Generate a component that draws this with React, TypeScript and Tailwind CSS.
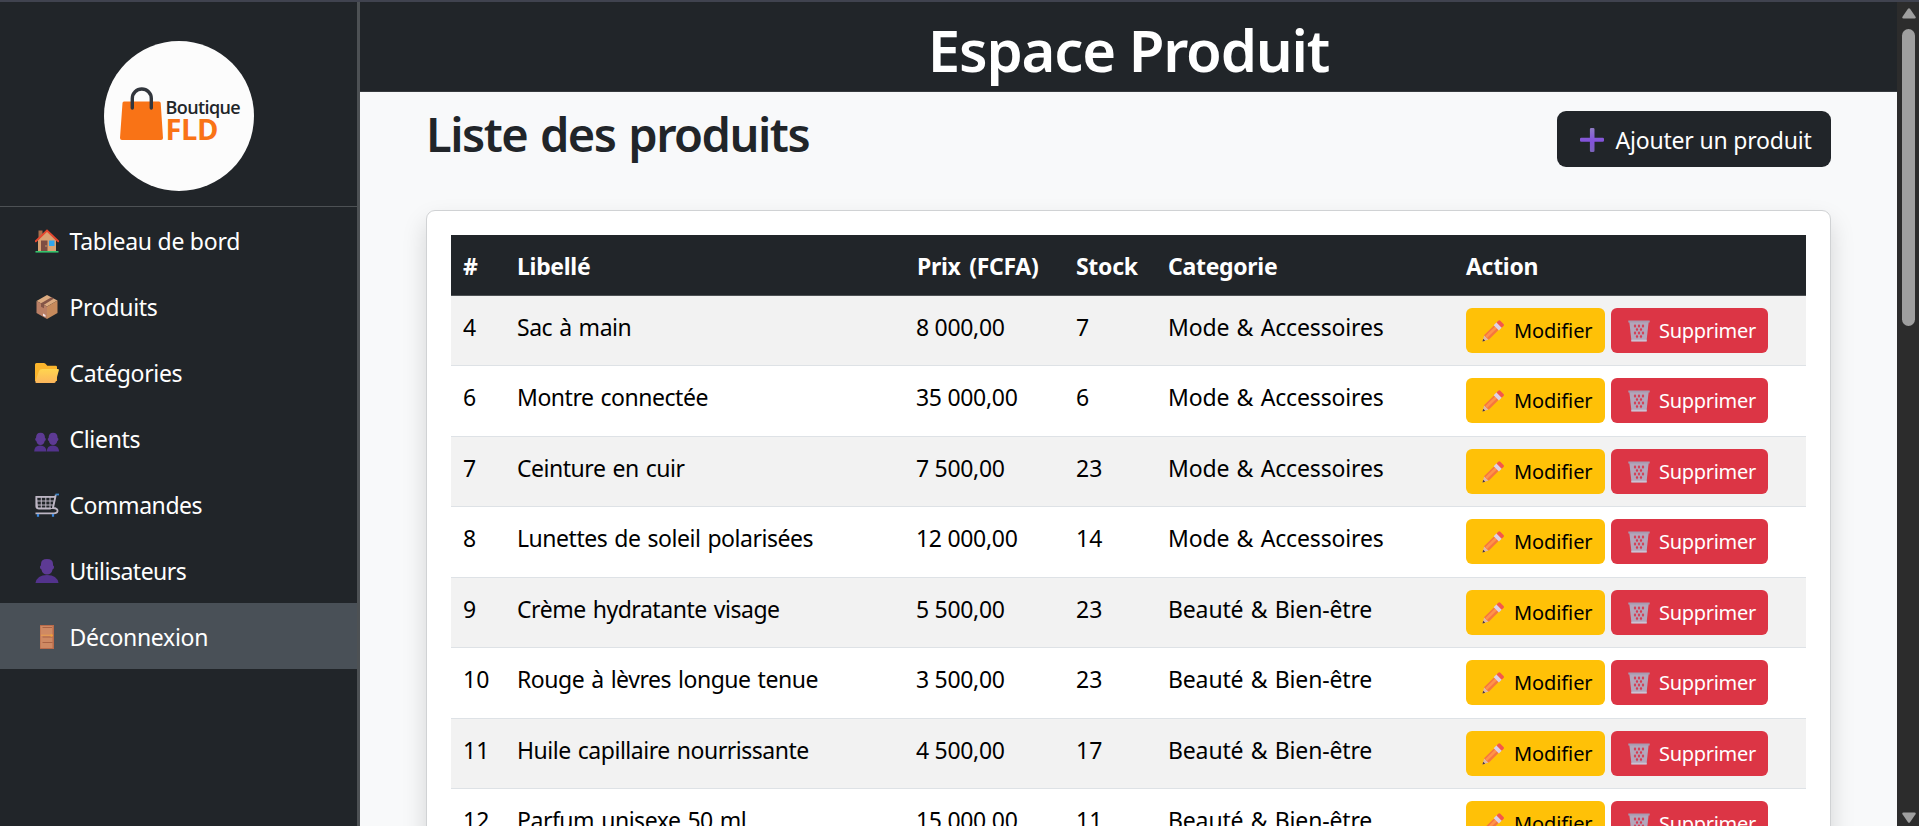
import React from 'react';

const navItems = [
  { label: 'Tableau de bord', icon: HouseIcon, active: false, track: 'tracking-[-0.25px]' },
  { label: 'Produits', icon: BoxIcon, active: false, track: 'tracking-[-0.3px]' },
  { label: 'Catégories', icon: FolderIcon, active: false, track: 'tracking-[-0.35px]' },
  { label: 'Clients', icon: PeopleIcon, active: false, track: 'tracking-[-0.3px]' },
  { label: 'Commandes', icon: CartIcon, active: false, track: 'tracking-[-0.45px]' },
  { label: 'Utilisateurs', icon: UserIcon, active: false, track: 'tracking-[-0.5px]' },
  { label: 'Déconnexion', icon: DoorIcon, active: true, track: 'tracking-[-0.3px]' },
];

const products = [
  { id: 4, name: 'Sac à main', price: '8 000,00', stock: 7, category: 'Mode & Accessoires' },
  { id: 6, name: 'Montre connectée', price: '35 000,00', stock: 6, category: 'Mode & Accessoires' },
  { id: 7, name: 'Ceinture en cuir', price: '7 500,00', stock: 23, category: 'Mode & Accessoires' },
  { id: 8, name: 'Lunettes de soleil polarisées', price: '12 000,00', stock: 14, category: 'Mode & Accessoires' },
  { id: 9, name: 'Crème hydratante visage', price: '5 500,00', stock: 23, category: 'Beauté & Bien-être' },
  { id: 10, name: 'Rouge à lèvres longue tenue', price: '3 500,00', stock: 23, category: 'Beauté & Bien-être' },
  { id: 11, name: 'Huile capillaire nourrissante', price: '4 500,00', stock: 17, category: 'Beauté & Bien-être' },
  { id: 12, name: 'Parfum unisexe 50 ml', price: '15 000,00', stock: 11, category: 'Beauté & Bien-être' },
];

function HouseIcon() {
  return (
    <svg viewBox="0 0 24 24" className="size-6">
      <path d="M3.500 1.500h4v7h-4z" fill="#a96f4c" />
      <path d="M12 2 21 11v11H3V11z" fill="#d9a273" />
      <path d="M6 11.500h6.500V22H6z" fill="#7d4d43" />
      <circle cx="11" cy="17" r=".7" fill="#e0b080" />
      <rect x="14" y="11.500" width="5.500" height="5.500" fill="#2fa5ee" />
      <path d="M.8 12.200 12 1.600l11.200 10.600" fill="none" stroke="#e5482f" strokeWidth="2" strokeLinecap="round" />
      <path d="M.5 22.800h23" stroke="#35c46e" strokeWidth="1.600" />
    </svg>
  );
}

function BoxIcon() {
  return (
    <svg viewBox="0 0 24 24" className="size-6">
      <path d="M12 0 22.500 5.500 12 11.500 1.500 6z" fill="#dcab80" />
      <path d="M1.500 6 12 11.500V24L1.500 18z" fill="#b97f65" />
      <path d="M22.500 5.500 12 11.500V24l10.500-6z" fill="#c68a5c" />
      <path d="m6 8.300 10.500-6 2.500 1.300L9 9.700v3.600l-3-1.600z" fill="#845547" />
      <path d="m8 18.500 2.500 1.400v2.200L8 20.700z" fill="#f3e7ec" />
    </svg>
  );
}

function FolderIcon() {
  return (
    <svg viewBox="0 0 24 24" className="size-6">
      <defs>
        <linearGradient id="folder" x1="0" y1="0" x2="0" y2="1">
          <stop offset="0" stopColor="#ffd54f" />
          <stop offset="1" stopColor="#fbb55c" />
        </linearGradient>
      </defs>
      <path d="M0 3.500Q0 2 1.500 2h7.300q1 0 1.700.8l1.800 1.900h8.500Q22 4.700 22 6v14H0z" fill="#fbb52c" />
      <path d="M7.500 8h15.300q1.500 0 1 1.500l-3 11q-.4 1.500-2 1.500H1.500Q0 22 .4 20.500L4 10q.7-2 3.500-2z" fill="url(#folder)" />
    </svg>
  );
}

function PeopleIcon() {
  return (
    <svg viewBox="0 0 24 24" className="size-6 overflow-visible">
      {[-0.8, 11.8].map((dx) => (
        <g key={dx} transform={`translate(${dx} 1)`}>
          <path d="M1.800 10q0-5.200 4.500-5.200T10.800 10q1 .2.8 1.600-.2 1.200-1.100 1.400-.8 4-4.200 4T2.100 13Q1.200 12.800 1 11.600.8 10.200 1.800 10z" fill="#5d3a94" />
          <path d="M0 23.500q0-6 6-6t6.300 6z" fill="#53338c" />
        </g>
      ))}
    </svg>
  );
}

function UserIcon() {
  return (
    <svg viewBox="0 0 24 24" className="size-6">
      <path d="M6 5q0-5 6-5t6 5v1.500q1.200.2 1 2-.2 1.500-1.300 1.700Q16.500 15.500 12 15.500T6.300 10.200Q5.200 10 5 8.500 4.800 6.700 6 6.500z" fill="#5d3a94" />
      <path d="M.5 24Q2 16 12 16t11.500 8z" fill="#53338c" />
    </svg>
  );
}

function CartIcon() {
  return (
    <svg viewBox="0 0 24 24" className="size-6 overflow-visible" fill="none" stroke="#bdb6c4">
      <path d="M1.500 3.800H20l-2.300 11.700H2.500zM1.500 8h17M2 12h16M6.300 4v11.500M10.800 4v11.500M15 4v11.500" strokeWidth="1" />
      <path d="M.5 3.800h20M1.300 3.500v9.500q0 2.500 2.500 2.500h12M20.800 1.800 18 15q5 .3 4.500 3.200Q22 20.300 19 20.300H.500" strokeWidth="1.800" />
      <path d="M20.500 1.500h3.500" stroke="#3f87c9" strokeWidth="1.800" />
      <path d="M3 21v2.800M18 21v2.800" stroke="#3a86dd" strokeWidth="2.200" />
    </svg>
  );
}

function DoorIcon() {
  return (
    <svg viewBox="0 0 24 24" className="size-6">
      <rect x="5" y="0" width="14" height="24" fill="#b96a4a" />
      <rect x="5.500" y="1" width="12" height="22" fill="#cf8963" />
      <path d="M7.500 2.500h9.500M7.500 12h10M7.500 17.500h10" stroke="#aa6244" strokeWidth="1" fill="none" />
      <path d="M6 10.300h11.500" stroke="#e39a55" strokeWidth="1.400" />
      <circle cx="16.500" cy="10.500" r="1.200" fill="#f0a03a" />
    </svg>
  );
}

function PlusIcon() {
  return (
    <svg viewBox="0 0 24 24" className="size-6">
      <defs>
        <linearGradient id="plus" x1="0" y1="0" x2="0" y2="1">
          <stop offset="0" stopColor="#8f7cc4" />
          <stop offset=".55" stopColor="#8351dc" />
          <stop offset="1" stopColor="#7a63b8" />
        </linearGradient>
      </defs>
      <path d="M11.200 0h2q1.300 0 1.300 1.300v8.500h8.200q1.300 0 1.300 1.300v1.400q0 1.300-1.300 1.300h-8.200v8.900q0 1.300-1.300 1.300h-2q-1.300 0-1.300-1.300v-8.900H1.300Q0 13.800 0 12.500v-1.400Q0 9.800 1.300 9.800h8.600V1.300Q9.900 0 11.200 0z" fill="url(#plus)" />
    </svg>
  );
}

function PencilIcon() {
  return (
    <svg viewBox="0 0 22 22" className="size-[22px]">
      <path d="m.5 21.500 1.700-6.300 4.400 4.400z" fill="#dfb9a9" />
      <path d="m.5 21.500.7-2.700 2 2z" fill="#443347" />
      <path d="M2 15.300 12.500 5l4.600 4.600L6.700 19.800z" fill="#f6763f" />
      <path d="m3.200 16.300 10.300-10.200 1.800 1.800L5 18.100z" fill="#ff934a" />
      <path d="m11.700 5.200 3-3 5.200 5.200-3 3z" fill="#dcd2ea" />
      <path d="m14.500 2.500 1.800-1.800q1-1 2 0l3.200 3.200q1 1 0 2l-1.800 1.800z" fill="#f4574b" />
    </svg>
  );
}

function TrashIcon() {
  return (
    <svg viewBox="0 0 22 22" className="size-[22px]">
      <path d="M1.300 1.500h19.400l-2.200 19.700h-15z" fill="#b3a6bb" />
      <path
        d="m7 4 1.300 2L7 8 5.700 6zm4 0 1.300 2L11 8 9.700 6zm4 0 1.300 2L15 8l-1.300-2zM9 7.500l1.300 2L9 11.500l-1.300-2zm4 0 1.300 2-1.300 2-1.300-2zM7 11l1.300 2L7 15l-1.300-2zm4 0 1.300 2-1.300 2-1.300-2zm4 0 1.300 2-1.300 2-1.300-2zm-6 3.500 1.300 2L9 18.500l-1.300-2zm4 0 1.300 2-1.300 2-1.300-2z"
        fill="#d63a52"
      />
      <path d="M.3 1.500h21.400" stroke="#a89bb0" strokeWidth="2" />
      <path d="M3.300 20.600h15.400" stroke="#cdc3d3" strokeWidth="1.800" />
    </svg>
  );
}

function Logo() {
  return (
    <div className="flex size-[150px] items-start rounded-full bg-[#fcfcfc] pt-[46px] pl-4">
      <svg viewBox="0 0 43 53" className="h-[53px] w-[43px] shrink-0">
        <path d="M4 14.500h35q1.500 0 1.700 1.500L43 51q0 2-2 2H2q-2 0-2-2L2.500 16q.1-1.500 1.500-1.500z" fill="#f97316" />
        <path d="M12.300 21V11.500a9.500 9.500 0 0 1 19 0V21" fill="none" stroke="#32363d" strokeWidth="3.400" strokeLinecap="round" />
      </svg>
      <div className="mt-[10px] ml-[3px] flex flex-col font-['Open_Sans',sans-serif]">
        <span className="text-[18px] leading-[21px] font-semibold tracking-[-0.6px] text-[#222529]">Boutique</span>
        <span className="text-[29px] leading-[21px] font-bold tracking-[-0.4px] text-[#f97316]">FLD</span>
      </div>
    </div>
  );
}

function Sidebar() {
  return (
    <aside className="flex w-[360px] shrink-0 flex-col border-r-[3px] border-[#4d5154] bg-[#212529]">
      <div className="flex h-[205px] shrink-0 justify-center border-b border-[#4d5154] pt-[39px]">
        <Logo />
      </div>
      <nav className="flex flex-col">
        {navItems.map(({ label, icon: Icon, active, track }) => (
          <a key={label} className={`flex h-[66px] items-center pt-0.5 pl-[35px] text-[23px] text-white ${track} ${active ? 'bg-[#495057]' : ''}`}>
            <Icon />
            <span className="ml-[10.5px]">{label}</span>
          </a>
        ))}
      </nav>
    </aside>
  );
}

function ProductTable() {
  return (
    <table className="w-[1355px] table-fixed border-separate border-spacing-0 text-left text-[23px] leading-9 text-black">
      <colgroup>
        <col className="w-[54px]" />
        <col className="w-[400px]" />
        <col className="w-[159px]" />
        <col className="w-[92px]" />
        <col className="w-[298px]" />
        <col className="w-[352px]" />
      </colgroup>
      <thead>
        <tr className="h-[61px] bg-[#212529] font-bold text-white">
          {['#', 'Libellé', 'Prix (FCFA)', 'Stock', 'Categorie', 'Action'].map((title) => (
            <th key={title} className="border-b border-[#4d5154] px-3 pt-[2px] tracking-[-0.3px] whitespace-nowrap [word-spacing:3px]">
              {title}
            </th>
          ))}
        </tr>
      </thead>
      <tbody className="[&_td]:border-b [&_td]:border-[#dee2e6] [&_td]:px-3">
        {products.map((p) => (
          <tr key={p.id} className="h-[71px] align-top odd:h-[70px] odd:bg-[#f2f2f2]">
            <td className="pt-[13px]">{p.id}</td>
            <td className="pt-[13px] tracking-[-0.47px] [word-spacing:1.5px]">{p.name}</td>
            <td className="pt-[13px] tracking-[-0.3px]"><span className="-ml-px">{p.price}</span></td>
            <td className="pt-[13px]">{p.stock}</td>
            <td className="pt-[13px] tracking-[-0.15px] whitespace-nowrap [word-spacing:1.5px]">{p.category}</td>
            <td className="pt-3">
              <div className="flex gap-[6px] text-[20px] tracking-[-0.1px]">
                <button className="flex h-[45px] w-[139px] items-center gap-[10px] rounded-md bg-[#ffc107] pt-px pl-4">
                  <PencilIcon />
                  Modifier
                </button>
                <button className="flex h-[45px] w-[157px] items-center gap-[9px] rounded-md bg-[#dc3545] pt-px pl-[17px] tracking-[-0.3px] text-white">
                  <TrashIcon />
                  Supprimer
                </button>
              </div>
            </td>
          </tr>
        ))}
      </tbody>
    </table>
  );
}

function Scrollbar() {
  return (
    <div className="flex w-[22px] shrink-0 flex-col items-center bg-[#2c2c2c]">
      <svg viewBox="0 0 14 11" className="mt-[6px] ml-px h-[11px] w-[14px]">
        <path d="M6 .8q1-1 2 0l5.500 8q.8 1.700-1 1.700h-11q-1.800 0-1-1.700z" fill="#9f9f9f" />
      </svg>
      <div className="mt-[10px] ml-px h-[297px] w-[13px] rounded-full bg-[#9f9f9f]" />
      <svg viewBox="0 0 14 11" className="mt-auto mb-[3px] ml-px h-[11px] w-[14px]">
        <path d="M6 10.200q1 1 2 0l5.500-8q.8-1.700-1-1.700h-11q-1.800 0-1 1.700z" fill="#9f9f9f" />
      </svg>
    </div>
  );
}

export default function App() {
  return (
    <div className="flex h-[826px] w-full flex-col overflow-hidden bg-[#f8f9fa] font-['Noto_Sans',sans-serif]">
      <div className="h-[2px] shrink-0 bg-[#40434f]" />
      <div className="flex min-h-0 flex-1">
        <Sidebar />
        <main className="min-w-0 flex-1 overflow-hidden">
          <header className="flex h-[90px] items-center justify-center border-b border-[#373b3e] bg-[#212529] pt-[7px]">
            <h1 className="text-[58px] leading-[72px] font-semibold tracking-[-1.2px] text-white">Espace Produit</h1>
          </header>
          <div className="px-[66px]">
            <div className="flex items-start justify-between pt-[14px]">
              <h2 className="text-[47px] leading-[56px] font-semibold tracking-[-1.5px] text-[#212529] [word-spacing:2px]">Liste des produits</h2>
              <button className="mt-[5px] flex h-[56px] w-[274px] items-center rounded-[9px] bg-[#212529] pt-0.5 pl-[23px] text-[23px] text-white">
                <PlusIcon />
                <span className="ml-[11.5px] tracking-[-0.2px] whitespace-nowrap">Ajouter un produit</span>
              </button>
            </div>
            <section className="mt-[43px] rounded-[9px] border border-[#d0d2d4] bg-white px-6 pt-[24px] pb-6 shadow-[0_12px_24px_rgba(0,0,0,0.15)]">
              <ProductTable />
            </section>
          </div>
        </main>
        <Scrollbar />
      </div>
    </div>
  );
}
